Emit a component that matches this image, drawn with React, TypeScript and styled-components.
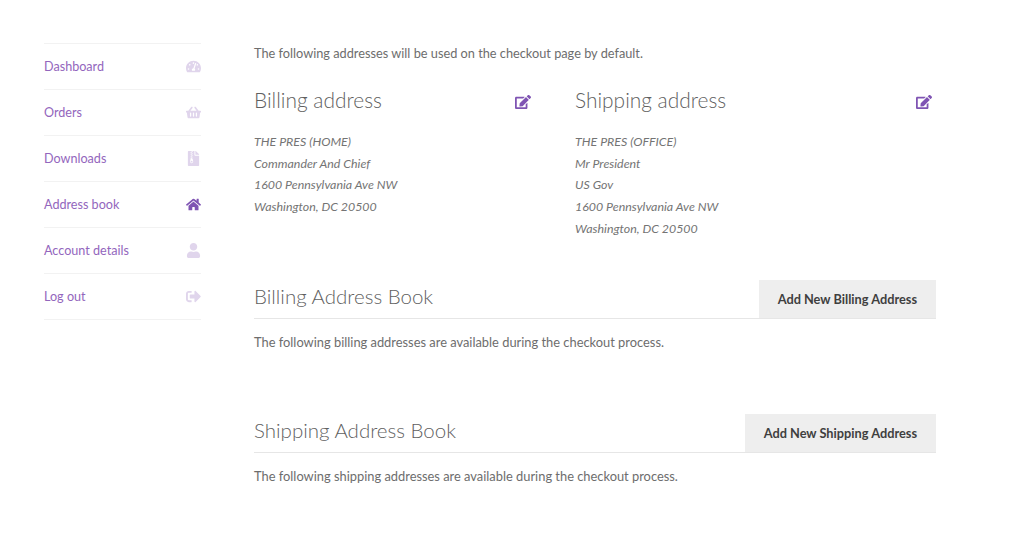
import React from 'react';
import styled, { createGlobalStyle } from 'styled-components';
import { FaEdit, FaFileArchive, FaHome, FaShoppingBasket, FaSignOutAlt, FaTachometerAlt, FaUser } from 'react-icons/fa';

const GlobalStyle = createGlobalStyle`
  html, body {
    margin: 0;
    background: #fff;
    font-family: Lato, "Open Sans", sans-serif;
    color: #6d6d6d;
  }
`;

const Page = styled.div`
  display: grid;
  grid-template-columns: 157px 682px;
  column-gap: 53px;
  padding: 43px 0 0 44px;
  height: 494px;
  overflow: hidden;
`;

const Nav = styled.nav`
  display: flex;
  flex-direction: column;
  align-self: start;
  border-top: 1px solid #f2f2f2;
`;

const NavItem = styled.a<{ $active?: boolean }>`
  display: flex;
  justify-content: space-between;
  align-items: center;
  height: 45px;
  border-bottom: 1px solid #f2f2f2;
  font-size: 12.6px;
  color: #9366bd;
  svg {
    font-size: 15px;
    color: ${p => (p.$active ? '#7f54b3' : '#e0d5ec')};
  }
`;

const Main = styled.main`
  display: flex;
  flex-direction: column;
`;

const Intro = styled.p`
  margin: 2px 0 0;
  font-size: 12.75px;
  line-height: 17px;
`;

const Columns = styled.div`
  display: grid;
  grid-template-columns: 277px 357px;
  column-gap: 44px;
  margin-top: 23px;
  height: 195px;
`;

const Column = styled.section``;

const ColumnHead = styled.div`
  display: flex;
  justify-content: space-between;
  align-items: center;
  height: 30px;
  h3 {
    margin-bottom: 2px;
  }
  svg {
    font-size: 16px;
    color: #7f54b3;
    margin-top: 4px;
  }
`;

const Title = styled.h3`
  margin: 0;
  font-size: 20.9px;
  font-weight: 300;
  color: #5f5f5f;
`;

const Address = styled.address`
  margin-top: 16px;
  font-size: 12.4px;
  line-height: 21.7px;
  font-style: italic;
  color: #747474;
`;

const BookHead = styled.div`
  display: flex;
  justify-content: space-between;
  align-items: stretch;
  height: 38px;
  border-bottom: 1px solid #e6e6e6;
`;

const BookTitle = styled(Title)`
  align-self: center;
  padding-bottom: 6px;
  font-size: 20.5px;
`;

const AddButton = styled.a`
  display: flex;
  align-items: center;
  padding: 0 19px;
  background: #eeeeee;
  color: #3f3f3f;
  font-size: 12.78px;
  font-weight: 700;
`;

const BookNote = styled.p<{ $gap: number }>`
  margin: 15px 0 ${p => p.$gap}px;
  font-size: 12.87px;
  line-height: 17px;
`;

const links = [
  { label: 'Dashboard', icon: <FaTachometerAlt /> },
  { label: 'Orders', icon: <FaShoppingBasket /> },
  { label: 'Downloads', icon: <FaFileArchive /> },
  { label: 'Address book', icon: <FaHome />, active: true },
  { label: 'Account details', icon: <FaUser /> },
  { label: 'Log out', icon: <FaSignOutAlt /> },
];

const App = () => (
  <Page>
    <GlobalStyle />
    <Nav>
      {links.map(l => (
        <NavItem key={l.label} $active={l.active}>
          {l.label}
          {l.icon}
        </NavItem>
      ))}
    </Nav>
    <Main>
      <Intro>The following addresses will be used on the checkout page by default.</Intro>
      <Columns>
        <Column>
          <ColumnHead>
            <Title>Billing address</Title>
            <FaEdit />
          </ColumnHead>
          <Address>
            THE PRES (HOME)<br />
            Commander And Chief<br />
            1600 Pennsylvania Ave NW<br />
            Washington, DC 20500
          </Address>
        </Column>
        <Column>
          <ColumnHead>
            <Title>Shipping address</Title>
            <FaEdit />
          </ColumnHead>
          <Address>
            THE PRES (OFFICE)<br />
            Mr President<br />
            US Gov<br />
            1600 Pennsylvania Ave NW<br />
            Washington, DC 20500
          </Address>
        </Column>
      </Columns>
      <BookHead>
        <BookTitle>Billing Address Book</BookTitle>
        <AddButton>Add New Billing Address</AddButton>
      </BookHead>
      <BookNote $gap={63}>The following billing addresses are available during the checkout process.</BookNote>
      <BookHead>
        <BookTitle>Shipping Address Book</BookTitle>
        <AddButton>Add New Shipping Address</AddButton>
      </BookHead>
      <BookNote $gap={0}>The following shipping addresses are available during the checkout process.</BookNote>
    </Main>
  </Page>
);

export default App;
